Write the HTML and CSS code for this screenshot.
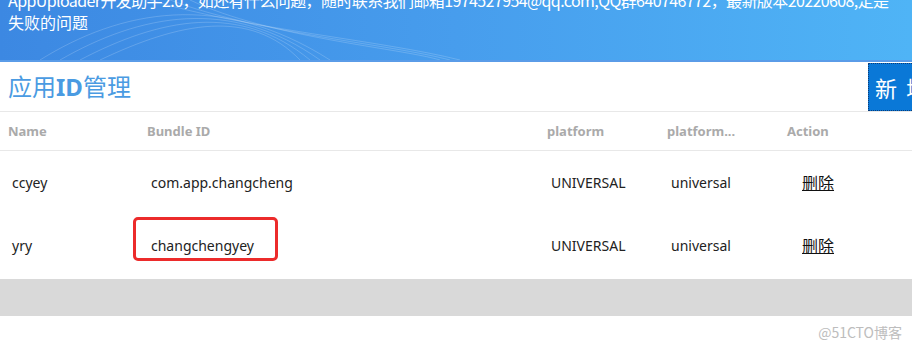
FILE: index.html
```html
<!DOCTYPE html>
<html lang="zh">
<head>
  <meta charset="UTF-8">
  <meta name="viewport" content="width=device-width, initial-scale=1.0">
  <title>应用ID管理</title>
  <link rel="stylesheet" href="styles.css">
</head>
<body>
  <div class="banner">
    <svg class="waves" width="912" height="60" viewBox="0 0 912 60">
      <path d="M40 60 C 120 10, 220 -10, 330 60" />
      <path d="M60 60 C 140 14, 230 -4, 320 60" />
      <path d="M80 60 C 160 18, 240 2, 310 60" />
      <path d="M100 60 C 180 22, 250 8, 300 60" />
      <path d="M150 0 C 250 30, 380 40, 460 60" />
      <path d="M170 0 C 260 34, 390 44, 450 60" />
      <path d="M190 0 C 270 38, 400 48, 440 60" />
    </svg>
    <p class="notice"><span class="line">AppUploader开发助手2.0，如还有什么问题，随时联系我们邮箱1974527954@qq.com,QQ群640746772，最新版本20220608,定是</span><br>失败的问题</p>
  </div>

  <div class="titlebar">
    <h1>应用<b>ID</b>管理</h1>
    <button class="add">新增</button>
  </div>

  <table class="list">
    <thead>
      <tr>
        <th class="c-name">Name</th>
        <th class="c-bundle">Bundle ID</th>
        <th class="c-plat">platform</th>
        <th class="c-plat2">platform...</th>
        <th class="c-action">Action</th>
      </tr>
    </thead>
    <tbody>
      <tr>
        <td>ccyey</td>
        <td>com.app.changcheng</td>
        <td>UNIVERSAL</td>
        <td>universal</td>
        <td><a href="#">删除</a></td>
      </tr>
      <tr>
        <td>yry</td>
        <td class="marked">changchengyey<span class="mark"></span></td>
        <td>UNIVERSAL</td>
        <td>universal</td>
        <td><a href="#">删除</a></td>
      </tr>
    </tbody>
  </table>

  <div class="footer-bar"></div>
  <div class="watermark">@51CTO博客</div>
</body>
</html>
```

FILE: styles.css
```css
body {
  margin: 0;
  width: 912px;
  overflow: hidden;
  background: #fff;
  font-family: 'Noto Sans', 'Noto Sans CJK SC', sans-serif;
  color: #333;
}

.banner {
  position: relative;
  height: 60px;
  overflow: hidden;
  background: linear-gradient(90deg, #3c88e2 0%, #479ded 50%, #4fb4f6 100%);
  border-bottom: 2px solid #5a9ce8;
}

.waves {
  position: absolute;
  left: 0;
  top: 0;
}

.waves path {
  fill: none;
  stroke: rgba(255, 255, 255, 0.18);
  stroke-width: 1;
}

.notice {
  position: relative;
  margin: -11px 0 0;
  padding: 0 8px;
  font-size: 16px;
  line-height: 22px;
  color: #fff;
  font-family: 'Noto Sans CJK SC', sans-serif;
  white-space: nowrap;
}

.notice .line {
  letter-spacing: -0.6px;
}

.titlebar {
  display: flex;
  justify-content: space-between;
  align-items: flex-start;
  height: 49px;
  border-bottom: 1px solid #e8e8e8;
}

h1 {
  margin: 0;
  padding: 8px 0 0 8px;
  font-size: 24px;
  line-height: 32px;
  font-weight: normal;
  color: #4a9be2;
  font-family: 'Noto Sans CJK SC', sans-serif;
}

h1 b {
  font-family: 'Noto Sans', sans-serif;
  font-weight: bold;
}

.add {
  flex: none;
  width: 60px;
  height: 48px;
  margin: 1px -16px 0 0;
  padding: 0 0 0 6px;
  text-align: left;
  background: #0a78d7;
  color: #fff;
  border: 1px dotted #0a3d7a;
  font-size: 22px;
  letter-spacing: 9px;
  font-family: 'Noto Sans CJK SC', sans-serif;
  white-space: nowrap;
  overflow: hidden;
}

.list {
  width: 100%;
  border-collapse: collapse;
  table-layout: fixed;
}

.list th {
  height: 38px;
  padding: 0 0 0 8px;
  text-align: left;
  font-size: 13px;
  font-weight: bold;
  color: #aaa;
  border-bottom: 1px solid #e8e8e8;
}

.c-name { width: 131px; }
.c-bundle { width: 392px; }
.c-plat { width: 112px; }
.c-plat2 { width: 112px; }

.list td {
  height: 63px;
  padding: 0 0 0 12px;
  font-size: 14px;
  color: #222;
  white-space: nowrap;
}

.list td a {
  margin-left: 11px;
  font-size: 16px;
  line-height: 18px;
  color: #111;
  font-family: 'Noto Sans CJK SC', sans-serif;
}

.marked {
  position: relative;
}

.mark {
  position: absolute;
  left: -6px;
  top: 3px;
  width: 139px;
  height: 38px;
  border: 3px solid #ec2b2b;
  border-radius: 5px;
}

.footer-bar {
  height: 37px;
  margin-top: 2px;
  background: #d9d9d9;
}

.watermark {
  padding: 6px 10px 0 0;
  text-align: right;
  font-size: 14px;
  color: #bdbdbd;
  font-family: 'Noto Sans CJK SC', sans-serif;
}
```
